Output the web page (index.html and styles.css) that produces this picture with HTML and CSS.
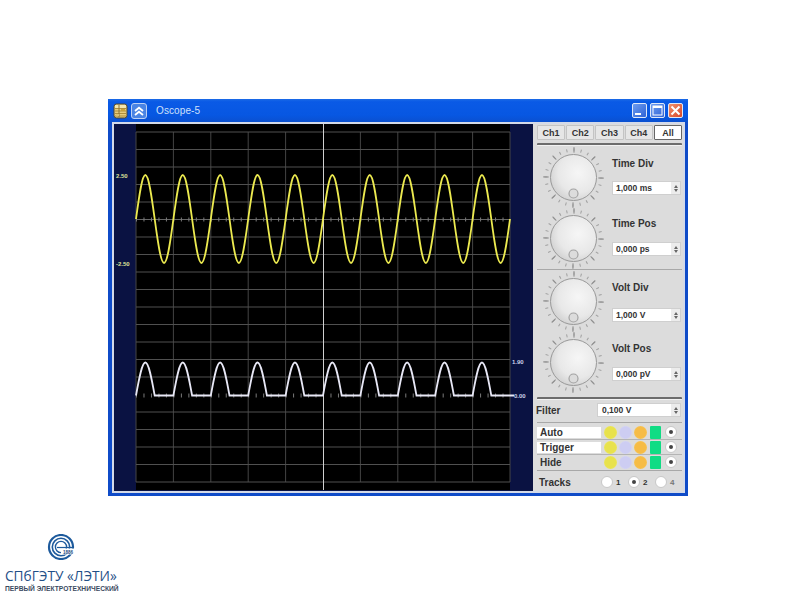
FILE: index.html
```html
<!DOCTYPE html>
<html lang="ru">
<head>
<meta charset="utf-8">
<title>Oscope-5</title>
<link rel="stylesheet" href="styles.css">
</head>
<body>
<main class="window">
  <header class="titlebar">
    <svg class="app-icon" viewBox="0 0 15 16" width="15" height="16">
      <rect x="1" y="1" width="13" height="14" rx="2.500" fill="#e6cc7c" stroke="#4a4432"/>
      <rect x="2" y="2" width="11" height="3" fill="#f2e6b0"/>
      <path d="M2 5.500H13M2 8H13M2 10.500H13M2 13H13" stroke="#b08e3a" stroke-width="1"/>
      <path d="M6 2V14" stroke="#8a7238" stroke-width="1"/>
      <rect x="8" y="6" width="4" height="2" fill="#c9a23a"/>
      <rect x="3" y="11" width="3" height="2" fill="#d8c070"/>
    </svg>
    <button class="roll-btn" type="button" aria-label="Roll up">
      <svg viewBox="0 0 16 16" width="16" height="16"><path d="M4 8l4-3.300 4 3.300M4 12l4-3.300 4 3.300" fill="none" stroke="#fff" stroke-width="1.800"/></svg>
    </button>
    <span class="title-text">Oscope-5</span>
    <div class="win-btns">
      <span class="win-btn"><svg viewBox="0 0 15 15" width="15" height="15"><rect x="3" y="10" width="6" height="2" fill="#fff"/></svg></span>
      <span class="win-btn"><svg viewBox="0 0 15 15" width="15" height="15"><rect x="3" y="3" width="9" height="9" fill="none" stroke="#fff"/><rect x="3" y="3" width="9" height="2" fill="#fff"/></svg></span>
      <span class="win-btn win-close"><svg viewBox="0 0 15 15" width="15" height="15"><path d="M3.500 3.500l8 8M11.500 3.500l-8 8" stroke="#fff" stroke-width="2"/></svg></span>
    </div>
  </header>

  <div class="win-body">
    <svg class="scope" viewBox="114 124 419 367" width="419" height="367">
      <defs>
        <radialGradient id="knobFill" cx="60%" cy="40%" r="72%">
          <stop offset="0" stop-color="#f6f6f6"/>
          <stop offset="0.6" stop-color="#e8e8e8"/>
          <stop offset="1" stop-color="#cacaca"/>
        </radialGradient>
        <symbol id="knob" viewBox="0 0 61 61">
          <circle cx="30.500" cy="30.500" r="27.500" fill="none" stroke="#a0a0a0" stroke-width="3" pathLength="24" stroke-dasharray="0.14 0.86"/>
          <circle cx="30.500" cy="30.500" r="27.500" fill="none" stroke="#909090" stroke-width="5.500" pathLength="8" stroke-dasharray="0.05 0.95"/>
          <circle cx="30.500" cy="30.500" r="23" fill="url(#knobFill)" stroke="#999"/>
          <circle cx="30.500" cy="46.500" r="4.500" fill="#dcdcdc" stroke="#a2a2a2" stroke-width="1.200"/>
        </symbol>
      </defs>
      <rect x="114" y="124" width="419" height="367" fill="#0a1242"/>
      <rect x="136" y="124" width="374" height="366" fill="#000"/>
      <path class="grid-v" d="M136 132V482M173.400 132V482M210.800 132V482M248.200 132V482M285.600 132V482M360.400 132V482M397.800 132V482M435.200 132V482M472.600 132V482M510 132V482"/>
      <path class="grid-h" d="M136 132H510M136 149.500H510M136 167H510M136 184.500H510M136 202H510M136 237H510M136 254.500H510M136 272H510M136 289.500H510M136 307H510M136 324.500H510M136 342H510M136 359.500H510M136 377H510M136 412H510M136 429.500H510M136 447H510M136 464.500H510M136 482H510"/>
      <path class="axis" d="M136 219.500H510"/>
      <path class="ticks" d="M136 219.500H510M136 395.500H510"/>
      <path class="center-line" d="M323.500 124V490"/>
      <path class="wave-y" d="M136 219
        c3.050-22.540 5.966-44 9.350-44c3.384 0 6.300 21.460 9.350 44c3.050 22.540 5.966 44 9.350 44c3.384 0 6.300-21.460 9.350-44
        c3.050-22.540 5.966-44 9.350-44c3.384 0 6.300 21.460 9.350 44c3.050 22.540 5.966 44 9.350 44c3.384 0 6.300-21.460 9.350-44
        c3.050-22.540 5.966-44 9.350-44c3.384 0 6.300 21.460 9.350 44c3.050 22.540 5.966 44 9.350 44c3.384 0 6.300-21.460 9.350-44
        c3.050-22.540 5.966-44 9.350-44c3.384 0 6.300 21.460 9.350 44c3.050 22.540 5.966 44 9.350 44c3.384 0 6.300-21.460 9.350-44
        c3.050-22.540 5.966-44 9.350-44c3.384 0 6.300 21.460 9.350 44c3.050 22.540 5.966 44 9.350 44c3.384 0 6.300-21.460 9.350-44
        c3.050-22.540 5.966-44 9.350-44c3.384 0 6.300 21.460 9.350 44c3.050 22.540 5.966 44 9.350 44c3.384 0 6.300-21.460 9.350-44
        c3.050-22.540 5.966-44 9.350-44c3.384 0 6.300 21.460 9.350 44c3.050 22.540 5.966 44 9.350 44c3.384 0 6.300-21.460 9.350-44
        c3.050-22.540 5.966-44 9.350-44c3.384 0 6.300 21.460 9.350 44c3.050 22.540 5.966 44 9.350 44c3.384 0 6.300-21.460 9.350-44
        c3.050-22.540 5.966-44 9.350-44c3.384 0 6.300 21.460 9.350 44c3.050 22.540 5.966 44 9.350 44c3.384 0 6.300-21.460 9.350-44
        c3.050-22.540 5.966-44 9.350-44c3.384 0 6.300 21.460 9.350 44c3.050 22.540 5.966 44 9.350 44c3.384 0 6.300-21.460 9.350-44"/>
      <path class="wave-w" d="M136 395.500
        c3.050-17 5.966-33 9.350-33c3.384 0 6.300 16 9.350 33h18.700
        c3.050-17 5.966-33 9.350-33c3.384 0 6.300 16 9.350 33h18.700
        c3.050-17 5.966-33 9.350-33c3.384 0 6.300 16 9.350 33h18.700
        c3.050-17 5.966-33 9.350-33c3.384 0 6.300 16 9.350 33h18.700
        c3.050-17 5.966-33 9.350-33c3.384 0 6.300 16 9.350 33h18.700
        c3.050-17 5.966-33 9.350-33c3.384 0 6.300 16 9.350 33h18.700
        c3.050-17 5.966-33 9.350-33c3.384 0 6.300 16 9.350 33h18.700
        c3.050-17 5.966-33 9.350-33c3.384 0 6.300 16 9.350 33h18.700
        c3.050-17 5.966-33 9.350-33c3.384 0 6.300 16 9.350 33h18.700
        c3.050-17 5.966-33 9.350-33c3.384 0 6.300 16 9.350 33h18.700H514"/>
      <text class="lbl-y" x="116" y="178">2.50</text>
      <text class="lbl-y" x="116" y="266">-2.50</text>
      <text class="lbl-w" x="512" y="364">1.90</text>
      <text class="lbl-w" x="514" y="398">0.00</text>
    </svg>

    <aside class="panel">
      <div class="tabs">
        <button class="tab" type="button">Ch1</button>
        <button class="tab" type="button">Ch2</button>
        <button class="tab" type="button">Ch3</button>
        <button class="tab" type="button">Ch4</button>
        <button class="tab tab-on" type="button">All</button>
      </div>
      <div class="bar bar-top"></div>

      <section class="knob-row knob-row-first">
        <svg class="knob" width="61" height="61"><use href="#knob"/></svg>
        <div class="ctl pad-11">
          <span class="ctl-label">Time Div</span>
          <div class="spin gap-11"><span class="spin-val">1,000 ms</span><span class="arrows"><i class="up"></i><i class="down"></i></span></div>
        </div>
      </section>
      <section class="knob-row">
        <svg class="knob" width="61" height="61"><use href="#knob"/></svg>
        <div class="ctl pad-10">
          <span class="ctl-label">Time Pos</span>
          <div class="spin gap-12"><span class="spin-val">0,000 ps</span><span class="arrows"><i class="up"></i><i class="down"></i></span></div>
        </div>
      </section>
      <div class="sep"></div>
      <section class="knob-row knob-row-first">
        <svg class="knob" width="61" height="61"><use href="#knob"/></svg>
        <div class="ctl pad-11">
          <span class="ctl-label">Volt Div</span>
          <div class="spin gap-14"><span class="spin-val">1,000 V</span><span class="arrows"><i class="up"></i><i class="down"></i></span></div>
        </div>
      </section>
      <section class="knob-row">
        <svg class="knob" width="61" height="61"><use href="#knob"/></svg>
        <div class="ctl pad-11">
          <span class="ctl-label">Volt Pos</span>
          <div class="spin gap-12"><span class="spin-val">0,000 pV</span><span class="arrows"><i class="up"></i><i class="down"></i></span></div>
        </div>
      </section>

      <div class="bar bar-mid"></div>
      <div class="filter">
        <span class="filter-label">Filter</span>
        <div class="spin spin-wide"><span class="spin-val">0,100 V</span><span class="arrows"><i class="up"></i><i class="down"></i></span></div>
      </div>
      <div class="sep sep-filter"></div>

      <div class="mode-rows">
        <div class="mode-row">
          <span class="mode-name">Auto</span>
          <i class="dot dot-y"></i><i class="dot dot-v"></i><i class="dot dot-o"></i><i class="sq"></i><i class="radio radio-on"></i>
        </div>
        <div class="mode-row">
          <span class="mode-name">Trigger</span>
          <i class="dot dot-y"></i><i class="dot dot-v"></i><i class="dot dot-o"></i><i class="sq"></i><i class="radio radio-on"></i>
        </div>
        <div class="mode-row mode-row-last">
          <span class="mode-name mode-plain">Hide</span>
          <i class="dot dot-y"></i><i class="dot dot-v"></i><i class="dot dot-o"></i><i class="sq"></i><i class="radio radio-on"></i>
        </div>
      </div>
      <div class="sep sep-tracks"></div>

      <div class="tracks">
        <span class="tracks-label">Tracks</span>
        <i class="radio"></i><span class="track-num">1</span>
        <i class="radio radio-on"></i><span class="track-num">2</span>
        <i class="radio"></i><span class="track-num track-dim">4</span>
      </div>
    </aside>
  </div>
</main>

<footer class="logo">
  <svg class="emblem" viewBox="0 0 30 26" width="30" height="26">
    <g fill="none" stroke="#1d5a9c">
      <circle cx="15" cy="13" r="12" stroke-width="2.200"/>
      <circle cx="15" cy="13" r="8.700" stroke-width="1.600"/>
      <circle cx="15" cy="13" r="5.600" stroke-width="1.400"/>
    </g>
    <rect x="15" y="14.500" width="15" height="6" fill="#fff"/>
    <path d="M11 13.500H28" stroke="#1d5a9c" stroke-width="1.200"/>
    <text class="emblem-year" x="17" y="19.500">1886</text>
  </svg>
  <div class="logo-name">СПбГЭТУ «ЛЭТИ»</div>
  <div class="logo-sub">ПЕРВЫЙ ЭЛЕКТРОТЕХНИЧЕСКИЙ</div>
</footer>
</body>
</html>
```

FILE: styles.css
```css
* { box-sizing: border-box; }
html, body { margin: 0; padding: 0; background: #fff; overflow: hidden; }
body { width: 794px; height: 596px; font-family: "Liberation Sans", Arial, sans-serif; }

.window {
  width: 580px;
  height: 397px;
  margin: 99px 0 0 108px;
  padding: 0 3px 3px 4px;
  background: #0f4bc8;
  display: flex;
  flex-direction: column;
}

.titlebar {
  height: 23px;
  margin: 0 -3px 0 -4px;
  padding: 0 5px 0 5px;
  display: flex;
  align-items: center;
  background: linear-gradient(#1b6ae6 0, #0a5ae6 12%, #0757e2 70%, #0a50d0 100%);
}
.app-icon { flex: none; }
.roll-btn {
  width: 16px; height: 16px; margin: 0 0 0 3px; padding: 0;
  border: 1px solid #bcd0f4; border-radius: 3px;
  background: #4a84e4;
  display: flex; align-items: center; justify-content: center;
}
.roll-btn svg { flex: none; }
.title-text { margin-left: 9px; font-size: 10px; color: #cfe0fb; letter-spacing: 0.1px; }
.win-btns { margin-left: auto; display: flex; gap: 3px; }
.win-btn {
  width: 15px; height: 15px;
  border: 1px solid #dfe8f8; border-radius: 2px;
  background: linear-gradient(135deg, #6d9cf0, #2f63d6);
  display: block; overflow: hidden;
}
.win-btn svg { display: block; margin: -1px; }
.win-close { background: linear-gradient(135deg, #f0906c, #d8482a); }

.win-body {
  flex: 1;
  display: flex;
  border: 2px solid #d4dae8;
  min-height: 0;
}
.scope { display: block; flex: none; }
.grid-v { stroke: #444; stroke-width: 1; fill: none; }
.grid-h { stroke: #505050; stroke-width: 1.100; fill: none; }
.axis { stroke: #666; stroke-width: 1; fill: none; }
.ticks { stroke: #7a7a7a; stroke-width: 4; stroke-dasharray: 1 6.480; fill: none; }
.center-line { stroke: #cfcfcf; stroke-width: 1; fill: none; }
.wave-y { stroke: #ecea50; stroke-width: 1.800; fill: none; }
.wave-w { stroke: #e8e8f6; stroke-width: 1.800; fill: none; }
.lbl-y { font: bold 6px "Liberation Sans", sans-serif; fill: #dfe09a; }
.lbl-w { font: bold 6px "Liberation Sans", sans-serif; fill: #cdd2ea; }

.panel {
  flex: 1;
  min-width: 0;
  background: #dcdcdc;
  padding: 1px 1px 0 4px;
  display: flex;
  flex-direction: column;
}
.tabs { display: flex; gap: 1px; height: 15px; }
.tab {
  flex: 1 1 0;
  margin: 0; padding: 0;
  font: bold 9px "Liberation Sans", sans-serif;
  color: #333;
  background: #e6e6e6;
  border: 1px solid #c4c4c4;
  border-radius: 1px;
}
.tab-on { background: #fff; border: 1px solid #666; }

.bar { height: 3px; background: linear-gradient(#6c6c6c 0 60%, #f2f2f2 60%); border-radius: 1px; flex: none; }
.bar-top { margin-top: 3px; }
.bar-mid { margin-top: 4px; }

.knob-row { display: flex; height: 61px; padding-left: 6px; flex: none; }
.knob-row-first { margin-top: 1px; }
.knob { display: block; flex: none; overflow: visible; }
.ctl { margin-left: 8px; display: flex; flex-direction: column; flex: 1; min-width: 0; padding-right: 1px; }
.pad-10 { padding-top: 10px; }
.pad-11 { padding-top: 11px; }
.ctl-label { height: 12px; line-height: 12px; font-size: 10px; font-weight: bold; color: #333; }
.gap-11 { margin-top: 11px; }
.gap-12 { margin-top: 12px; }
.gap-14 { margin-top: 14px; }

.spin {
  height: 14px;
  background: #fff;
  border: 1px solid #cfcfcf;
  display: flex;
  align-items: center;
  justify-content: space-between;
  padding-left: 3px;
}
.spin-val { font-size: 8.500px; font-weight: bold; color: #333; }
.arrows {
  width: 9px; height: 100%;
  background: #ececec;
  display: flex; flex-direction: column; align-items: center; justify-content: center; gap: 1px;
}
.up, .down { display: block; width: 0; height: 0; border-left: 2.500px solid transparent; border-right: 2.500px solid transparent; }
.up { border-bottom: 3px solid #666; }
.down { border-top: 3px solid #666; }

.sep { height: 1px; background: #a8a8a8; flex: none; }
.sep-filter { margin-top: 5px; margin-right: 0; }
.sep-tracks { margin-top: 1px; }

.filter { display: flex; align-items: center; margin-top: 3px; margin-left: -1px; margin-right: 1px; flex: none; }
.filter-label { width: 61px; font-size: 10px; font-weight: bold; color: #333; }
.spin-wide { flex: 1; padding-left: 4px; }

.mode-rows { margin-top: 2px; flex: none; }
.mode-row { display: flex; align-items: center; height: 15px; border-bottom: 1px solid #b4b4b4; }
.mode-row-last { border-bottom: 0; height: 14px; }
.mode-name {
  width: 64px; height: 11px; line-height: 11px;
  padding-left: 3px;
  font-size: 10px; font-weight: bold; color: #333;
  background: #fff;
}
.mode-plain { background: transparent; }
.dot { width: 13px; height: 13px; border-radius: 50%; flex: none; margin-left: 2px; }
.mode-row .dot:first-of-type { margin-left: 3px; }
.dot-y { background: radial-gradient(#e8e24c 0 55%, #f2ee6c 100%); }
.dot-v { background: radial-gradient(#cdcdf2 0 55%, #dadafa 100%); }
.dot-o { background: radial-gradient(#f6bc46 0 55%, #fad066 100%); }
.sq { width: 11px; height: 13px; background: #10dc84; border-radius: 1px; margin-left: 3px; flex: none; }
.radio {
  width: 12px; height: 12px; border-radius: 50%;
  background: #fff; border: 1px solid #c8c8c8;
  display: block; flex: none; position: relative;
}
.mode-row .radio { margin-left: 4px; }
.radio-on::after {
  content: ""; position: absolute; left: 3px; top: 3px;
  width: 4px; height: 4px; border-radius: 50%; background: #444;
}

.tracks { display: flex; align-items: center; height: 19px; padding-top: 3px; flex: none; }
.tracks-label { width: 62px; margin-left: 2px; font-size: 10px; font-weight: bold; color: #333; }
.track-num { width: 15px; padding-left: 3px; font-size: 8px; font-weight: bold; color: #333; }
.track-dim { color: #777; }

.logo { margin-top: 38px; width: 122px; padding-left: 5px; display: flex; flex-direction: column; }
.emblem { display: block; align-self: center; margin-left: -5px; }
.emblem-year { font: bold 4.500px "Liberation Sans", sans-serif; fill: #1d4a80; }
.logo-name { margin-top: 9px; font: 13.700px/14px "Open Sans", sans-serif; color: #1f4f87; white-space: nowrap; }
.logo-sub { margin-top: 1px; font: bold 6.700px/9px "Liberation Sans", sans-serif; color: #3a4a60; white-space: nowrap; }
```
